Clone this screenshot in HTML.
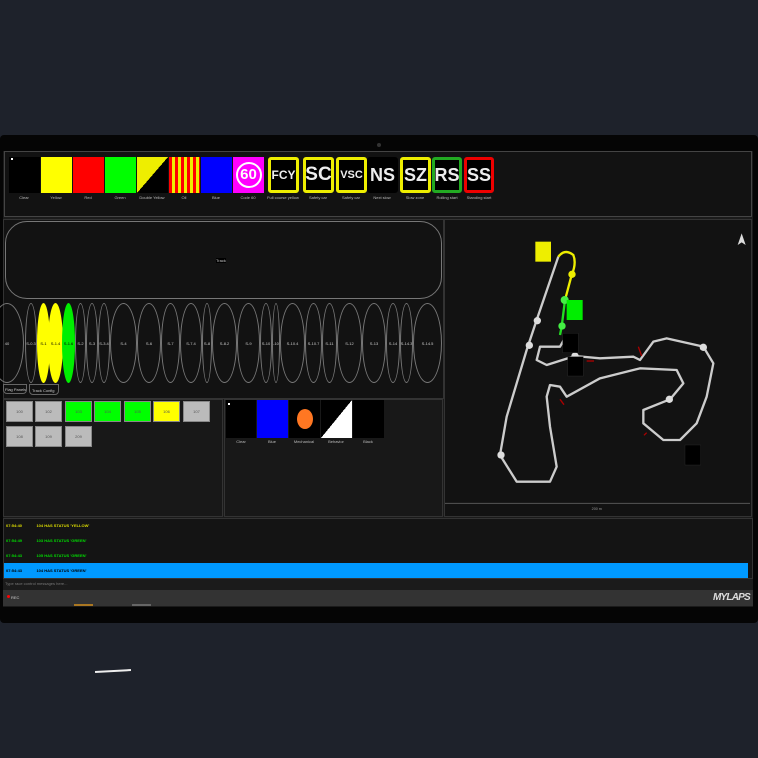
<!DOCTYPE html>
<html><head><meta charset="utf-8"><style>
*{margin:0;padding:0;box-sizing:border-box}
body{width:758px;height:758px;background:#1e222b;position:relative;overflow:hidden;font-family:"Liberation Sans",sans-serif}
.a{position:absolute}
.fl{position:absolute;top:157px;width:31px;height:36px}
.lb{position:absolute;top:195px;font-size:4px;color:#bbb;text-align:center;width:34px;white-space:nowrap}
.bx{position:absolute;background:#000;border:3px solid #ee0;color:#eee;font-weight:bold;font-size:18px;display:flex;align-items:center;justify-content:center;border-radius:3px}
.el{position:absolute;top:303px;height:80px;border:1.5px solid #777;border-radius:50%;display:flex;align-items:center;justify-content:center;font-size:4px;color:#ccc;white-space:nowrap;overflow:hidden}
.car{position:absolute;width:27px;height:21px;background:#bbb;border:1px solid #888;font-size:4px;color:#555;display:flex;align-items:center;justify-content:center}
.msg{position:absolute;left:6px;font-size:4px;font-weight:bold;white-space:nowrap}
</style></head><body>
<div class="a" style="left:0;top:135px;width:758px;height:488px;background:#050505;border-radius:4px"></div>
<div class="a" style="left:377px;top:143px;width:4px;height:4px;border-radius:50%;background:#333"></div>
<div class="a" style="left:3px;top:151px;width:750px;height:456px;background:#1b1b1b"></div>
<!-- flag panel -->
<div class="a" style="left:4px;top:151px;width:748px;height:66px;background:#121212;border:1px solid #444"></div>
<div class="fl" style="left:9px;background:#000"></div><div class="a" style="left:11px;top:158px;width:2px;height:2px;background:#fff"></div>
<div class="fl" style="left:41px;background:#ff0"></div>
<div class="fl" style="left:73px;background:#f00"></div>
<div class="fl" style="left:105px;background:#0f0"></div>
<div class="fl" style="left:137px;background:linear-gradient(to bottom right,#ee0 50%,#000 50%)"></div>
<div class="fl" style="left:169px;background:repeating-linear-gradient(90deg,#f00 0 3px,#ee0 3px 6px)"></div>
<div class="fl" style="left:201px;background:#00f"></div>
<div class="fl" style="left:233px;background:#f0f;display:flex;align-items:center;justify-content:center"><div style="width:26px;height:26px;border-radius:50%;border:2px solid #fff;color:#fff;font-weight:bold;font-size:15px;text-align:center;line-height:22px">60</div></div>
<div class="bx" style="left:268px;top:157px;width:31px;height:36px;font-size:12px">FCY</div>
<div class="bx" style="left:303px;top:157px;width:31px;height:36px;font-size:19px">SC</div>
<div class="bx" style="left:336px;top:157px;width:31px;height:36px;font-size:11px">VSC</div>
<div class="bx" style="left:367px;top:157px;width:31px;height:36px;border-color:#000;font-size:18px">NS</div>
<div class="bx" style="left:400px;top:157px;width:31px;height:36px;font-size:18px">SZ</div>
<div class="bx" style="left:432px;top:157px;width:30px;height:36px;border-color:#2a2;font-size:18px">RS</div>
<div class="bx" style="left:464px;top:157px;width:30px;height:36px;border-color:#e00;font-size:18px">SS</div>
<div class="lb" style="left:7px">Clear</div><div class="lb" style="left:39px">Yellow</div><div class="lb" style="left:71px">Red</div><div class="lb" style="left:103px">Green</div><div class="lb" style="left:135px">Double Yellow</div><div class="lb" style="left:167px">Oil</div><div class="lb" style="left:199px">Blue</div><div class="lb" style="left:231px">Code 60</div><div class="lb" style="left:266px">Full course yellow</div><div class="lb" style="left:301px">Safety car</div><div class="lb" style="left:334px">Safety car</div><div class="lb" style="left:365px">Next slow</div><div class="lb" style="left:398px">Slow zone</div><div class="lb" style="left:430px">Rolling start</div><div class="lb" style="left:462px">Standing start</div>
<!-- track panel -->
<div class="a" style="left:3px;top:219px;width:441px;height:180px;background:#121212;border:1px solid #333"></div>
<div class="a" style="left:5px;top:221px;width:437px;height:78px;border:1.5px solid #777;border-radius:22px"></div>
<div class="a" style="left:216px;top:258px;font-size:4px;color:#ccc;background:#000">Track</div>
<div class="el" style="left:-10px;width:34px">40</div>
<div class="el" style="left:25px;width:12px">S-0.3</div>
<div class="el" style="left:37px;width:13px;background:#ff0;border-color:#ff0;color:#000">S-1</div>
<div class="el" style="left:48px;width:15px;background:#ff0;border-color:#ff0;color:#000">S-1.4</div>
<div class="el" style="left:62px;width:13px;background:#0e0;border-color:#0e0;color:#000">S-1.6</div>
<div class="el" style="left:75px;width:11px">S-2</div>
<div class="el" style="left:86px;width:12px">S-3</div>
<div class="el" style="left:98px;width:12px">S-3.4</div>
<div class="el" style="left:110px;width:27px">S-4</div>
<div class="el" style="left:137px;width:24px">S-6</div>
<div class="el" style="left:161px;width:19px">S-7</div>
<div class="el" style="left:180px;width:22px">S-7.4</div>
<div class="el" style="left:202px;width:10px">S-8</div>
<div class="el" style="left:212px;width:25px">S-8.2</div>
<div class="el" style="left:237px;width:23px">S-9</div>
<div class="el" style="left:260px;width:12px">S-10</div>
<div class="el" style="left:272px;width:8px">-10</div>
<div class="el" style="left:280px;width:25px">S-10.4</div>
<div class="el" style="left:305px;width:17px">S-10.7</div>
<div class="el" style="left:322px;width:15px">S-11</div>
<div class="el" style="left:337px;width:25px">S-12</div>
<div class="el" style="left:362px;width:24px">S-13</div>
<div class="el" style="left:386px;width:14px">S-14</div>
<div class="el" style="left:400px;width:13px">S-14.3</div>
<div class="el" style="left:413px;width:29px">S-14.5</div>
<div class="a" style="left:3px;top:384px;width:24px;height:10px;border:1px solid #666;border-radius:0 0 4px 4px;font-size:4px;color:#ccc;padding:2px 1px;white-space:nowrap;overflow:hidden">Flag Panels</div>
<div class="a" style="left:29px;top:384px;width:30px;height:11px;border:1px solid #666;border-radius:0 0 4px 4px;font-size:4px;color:#ccc;padding:3px 2px;white-space:nowrap;overflow:hidden">Track Config</div>
<!-- map panel -->
<div class="a" style="left:444px;top:219px;width:308px;height:298px;background:#121212;border:1px solid #333"></div>
<svg class="a" style="left:440px;top:210px" width="318" height="310" viewBox="0 0 954 930">
<path d="M380 375 L360 410 L300 410 L290 450 L320 465 L405 438 L480 445 L580 440 L600 450 L640 395 L680 385 L790 410 L820 460 L800 560 L770 640 L720 690 L670 690 L610 640 L610 600 L690 568 L730 520 L710 480 L600 475 L480 505 L380 560 L360 530 L330 525 L320 560 L330 650 L350 770 L330 815 L230 815 L180 735 L200 620 L260 420 L290 330 L355 140" fill="none" stroke="#ccc" stroke-width="7" stroke-linejoin="round"/>
<path d="M355 140 Q375 115 400 135 Q410 160 395 195 L375 270" fill="none" stroke="#ee0" stroke-width="7"/>
<path d="M375 270 L365 350 L360 375" fill="none" stroke="#2d2" stroke-width="7"/>
<g fill="#ddd"><circle cx="292" cy="332" r="11"/><circle cx="268" cy="406" r="11"/><circle cx="405" cy="438" r="11"/><circle cx="790" cy="412" r="11"/><circle cx="688" cy="568" r="11"/><circle cx="183" cy="735" r="11"/></g>
<circle cx="396" cy="193" r="11" fill="#ee0"/><circle cx="374" cy="270" r="12" fill="#4e4"/><circle cx="366" cy="348" r="11" fill="#4e4"/>
<rect x="286" y="95" width="47" height="60" fill="#ee0"/><rect x="380" y="270" width="48" height="60" fill="#0e0"/>
<rect x="368" y="370" width="47" height="58" fill="#000" stroke="#333"/><rect x="383" y="440" width="47" height="58" fill="#000" stroke="#333"/><rect x="735" y="705" width="47" height="60" fill="#000" stroke="#333"/>
<g stroke="#a00" stroke-width="4"><line x1="595" y1="410" x2="605" y2="438"/><line x1="440" y1="453" x2="462" y2="453"/><line x1="360" y1="568" x2="372" y2="584"/><line x1="612" y1="676" x2="620" y2="668"/></g>
<path d="M905 70 L893 105 L905 97 L917 105 Z" fill="#ddd"/>
<line x1="15" y1="880" x2="930" y2="880" stroke="#555" stroke-width="3"/>
<text x="455" y="900" font-size="11" fill="#999" font-family="Liberation Sans">200 m</text>
</svg>
<!-- lower panels -->
<div class="a" style="left:3px;top:399px;width:220px;height:118px;background:#181818;border:1px solid #333"></div>
<div class="a" style="left:224px;top:399px;width:219px;height:118px;background:#181818;border:1px solid #333"></div>
<div class="car" style="left:6px;top:401px">100</div><div class="car" style="left:35px;top:401px">102</div>
<div class="car" style="left:65px;top:401px;background:#0f0">103</div><div class="car" style="left:94px;top:401px;background:#0f0">104</div><div class="car" style="left:124px;top:401px;background:#0f0">105</div><div class="car" style="left:153px;top:401px;background:#ff0">106</div><div class="car" style="left:183px;top:401px">107</div>
<div class="car" style="left:6px;top:426px">108</div><div class="car" style="left:35px;top:426px">109</div><div class="car" style="left:65px;top:426px">209</div>
<div class="a" style="left:226px;top:400px;width:30px;height:38px;background:#000"></div><div class="a" style="left:228px;top:403px;width:2px;height:2px;background:#fff"></div>
<div class="a" style="left:257px;top:400px;width:31px;height:38px;background:#00f"></div>
<div class="a" style="left:289px;top:400px;width:31px;height:38px;background:#000"><div style="margin:9px auto;width:16px;height:20px;border-radius:50%;background:#f72"></div></div>
<div class="a" style="left:321px;top:400px;width:31px;height:38px;background:linear-gradient(to bottom right,#000 50%,#fff 50%)"></div>
<div class="a" style="left:353px;top:400px;width:31px;height:38px;background:#000"></div>
<div class="lb" style="left:224px;top:439px">Clear</div><div class="lb" style="left:255px;top:439px">Blue</div><div class="lb" style="left:287px;top:439px">Mechanical</div><div class="lb" style="left:319px;top:439px">Behavior</div><div class="lb" style="left:351px;top:439px">Black</div>
<!-- messages -->
<div class="a" style="left:3px;top:518px;width:750px;height:61px;background:#141414;border:1px solid #333"></div>
<div class="msg" style="top:523px;color:#dd0">07:54:40 &nbsp;&nbsp;&nbsp;&nbsp;&nbsp;&nbsp;&nbsp;&nbsp;&nbsp;&nbsp;&nbsp; 104 HAS STATUS 'YELLOW'</div>
<div class="msg" style="top:538px;color:#0d0">07:54:49 &nbsp;&nbsp;&nbsp;&nbsp;&nbsp;&nbsp;&nbsp;&nbsp;&nbsp;&nbsp;&nbsp; 103 HAS STATUS 'GREEN'</div>
<div class="msg" style="top:553px;color:#0d0">07:54:43 &nbsp;&nbsp;&nbsp;&nbsp;&nbsp;&nbsp;&nbsp;&nbsp;&nbsp;&nbsp;&nbsp; 105 HAS STATUS 'GREEN'</div>
<div class="a" style="left:4px;top:563px;width:744px;height:15px;background:#09f"></div>
<div class="msg" style="top:568px;color:#000">07:54:43 &nbsp;&nbsp;&nbsp;&nbsp;&nbsp;&nbsp;&nbsp;&nbsp;&nbsp;&nbsp;&nbsp; 104 HAS STATUS 'GREEN'</div>
<div class="a" style="left:5px;top:581px;font-size:4px;color:#777">Type race control messages here...</div>
<div class="a" style="left:3px;top:590px;width:750px;height:16px;background:#333"></div>
<div class="a" style="left:7px;top:595px;width:3px;height:3px;border-radius:50%;background:#f00"></div>
<div class="a" style="left:11px;top:595px;font-size:4px;color:#ccc">REC</div>
<div class="a" style="left:74px;top:604px;width:19px;height:2px;background:#a72"></div>
<div class="a" style="left:132px;top:604px;width:19px;height:2px;background:#666"></div>
<div class="a" style="left:713px;top:592px;font-size:10px;font-weight:bold;font-style:italic;color:#ddd;letter-spacing:-0.8px">MYLAPS</div>
<div class="a" style="left:95px;top:670px;width:36px;height:2px;background:#eee;transform:rotate(-3deg)"></div>
</body></html>
